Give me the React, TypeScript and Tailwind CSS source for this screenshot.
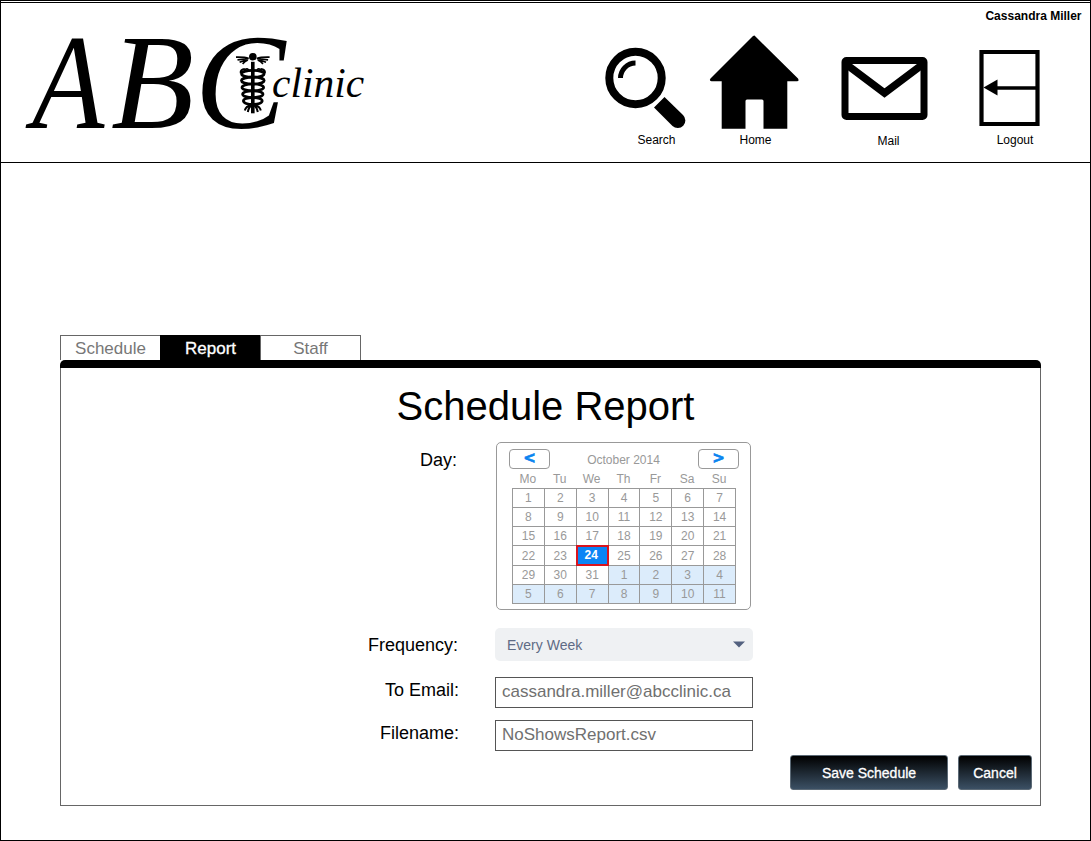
import React from "react";

const weekDays = ["Mo", "Tu", "We", "Th", "Fr", "Sa", "Su"];
const days = [
  ...Array.from({ length: 31 }, (_, i) => ({ n: i + 1, next: false })),
  ...Array.from({ length: 11 }, (_, i) => ({ n: i + 1, next: true })),
];

const coils = [
  { y: 72.8, rx: 11.4 },
  { y: 79.6, rx: 11.4 },
  { y: 86.4, rx: 10.8 },
  { y: 93.2, rx: 10.2 },
  { y: 100, rx: 9.4 },
];

function Logo() {
  return (
    <svg
      width="380"
      height="158"
      viewBox="1 3 380 158"
      fill="#000"
      className="shrink-0 font-['Liberation_Serif',serif] italic"
      role="img"
      aria-label="ABC clinic"
    >
      <text transform="translate(32 128) scale(.87 1)" fontSize="136">A</text>
      <text x="111" y="128" fontSize="136">B</text>
      <text x="194.8" y="128.3" fontSize="136">C</text>
      <text x="272" y="97.3" fontSize="41.5">clinic</text>
      <g transform="translate(252.8 0)">
        <circle cx="0" cy="56.7" r="3.8" />
        <rect x="-1.8" y="61.8" width="3.6" height="51.5" />
        {[1, -1].map((s) => (
          <g key={s} transform={`scale(${s} 1)`} fill="none" stroke="#000">
            <path
              d="M4 58.5Q8 57 16.8 57.2M4.5 59Q9 59 15.3 59.8M4.8 59.5Q9 60.5 13.2 62.3M5 60Q8 61.5 10.2 63.8"
              strokeWidth="1.7"
            />
            <path d="M4 70.8Q4.5 68 7.5 69.2L8.5 70" strokeWidth="1.6" />
            <path d="M8 69Q12.5 69.5 12 73" strokeWidth="2.2" />
            <path d="M1 105Q7 106 8 110.5M0 104.5Q4 106.5 5 112" strokeWidth="2" />
          </g>
        ))}
        {coils.map((c) => (
          <ellipse key={c.y} cx="0" cy={c.y + 1} rx={c.rx} ry="3.4" fill="none" stroke="#000" strokeWidth="2.7" />
        ))}
      </g>
    </svg>
  );
}

function Header() {
  return (
    <header className="flex h-[161px] items-start border-y border-black">
      <Logo />
      <div className="flex flex-1 flex-col text-[12px] leading-[14px]">
        <div className="mt-[6px] pr-[8.5px] text-right font-bold">Cassandra Miller</div>
        <nav className="flex items-start pl-[223px]">
          <a className="mt-[24px] flex w-[82px] flex-col">
            <svg width="82" height="82" viewBox="0 0 82 82">
              <circle cx="31.5" cy="31" r="26.2" fill="none" stroke="#000" strokeWidth="8" />
              <path d="M31.5 16A15 15 0 0 0 16.5 31" fill="none" stroke="#000" strokeWidth="5" />
              <path d="M60.5 50L79 68A7.6 7.6 0 0 1 68.5 79L50 60.5Z" />
            </svg>
            <span className="mt-[4px] ml-[33.5px]">Search</span>
          </a>
          <a className="mt-[11px] ml-[22px] flex w-[92px] flex-col items-center">
            <svg width="92" height="96" viewBox="-.5 0 92 96">
              <path d="M46 1.5L89.5 44.5Q91 47.2 88.5 47.2H78.8V94.8H55V67Q55 65.5 53.5 65.5H38.5Q37 65.5 37 67V94.8H13.2V47.2H3Q.3 47 2 44.5L44.5 2Q46 1 47.5 2Z" />
            </svg>
            <span className="mt-[3px] ml-[3px]">Home</span>
          </a>
          <a className="mt-[34px] ml-[40px] flex w-[88px] flex-col items-center">
            <svg width="88" height="63" viewBox="0 0 88 63" fill="none" stroke="#000" strokeWidth="7">
              <rect x="5" y="3.5" width="79" height="56" rx="1.5" />
              <path d="M6.5 7.5L44.5 36L82.5 7.5" strokeWidth="7.5" />
            </svg>
            <span className="mt-[14px] ml-[9px]">Mail</span>
          </a>
          <a className="mt-[27px] ml-[51px] flex w-[61px] flex-col items-center">
            <svg width="61" height="76" viewBox="0 0 61 76">
              <path d="M2.5 2H58.5V74H2.5Z" fill="none" stroke="#000" strokeWidth="4.2" />
              <path d="M17 38H57" stroke="#000" strokeWidth="3.4" />
              <path d="M4.5 37.5L18.5 29.5V45.5Z" />
            </svg>
            <span className="mt-[7px] ml-[11px]">Logout</span>
          </a>
        </nav>
      </div>
    </header>
  );
}

function NavButton({ children }: { children: React.ReactNode }) {
  return (
    <button className="flex h-[20px] w-[41px] items-center justify-center rounded-[4px] border border-[#999] pb-[2px] font-['DejaVu_Sans',sans-serif] text-[15px] leading-none font-bold text-[#0a84f0] [-webkit-text-stroke:0.6px_#0a84f0]">
      {children}
    </button>
  );
}

function Calendar() {
  return (
    <div className="h-[168px] w-[255px] rounded-[5px] border border-[#999] pt-[6px] pr-[11px] pl-[12px] text-[12px] text-[#999]">
      <div className="flex h-[20px] items-center justify-between leading-[14px]">
        <NavButton>&lt;</NavButton>
        <span className="pt-[2px] pr-px">October 2014</span>
        <NavButton>&gt;</NavButton>
      </div>
      <div className="ml-[3px] grid h-[19px] w-[223px] grid-cols-7 items-center text-center leading-[14px]">
        {weekDays.map((d) => (
          <span key={d}>{d}</span>
        ))}
      </div>
      <div className="ml-[3px] grid h-[116px] w-[224px] grid-cols-7 grid-rows-6 border-r border-b border-[#999]">
        {days.map((d, i) => (
          <div
            key={i}
            className={
              !d.next && d.n === 24
                ? "z-10 -mr-px -mb-px flex items-center justify-center border-2 border-[#d9141e] bg-[#0a84f5] pr-[2px] pb-px font-bold text-white"
                : d.next
                  ? "flex items-center justify-center border-t border-l border-[#999] bg-[#dcecfb]"
                  : "flex items-center justify-center border-t border-l border-[#999]"
            }
          >
            {d.n}
          </div>
        ))}
      </div>
    </div>
  );
}

export default function App() {
  return (
    <div className="flex h-[841px] w-[1091px] flex-col border border-black bg-white pt-px font-['Liberation_Sans',Arial,sans-serif] text-black">
      <Header />
      <main className="mt-[172px] ml-[59px] w-[981px]">
        <div className="flex h-[25px] text-center text-[17px] leading-[26px] text-[#777]">
          <div className="w-[100px] border-t border-l border-[#666]">Schedule</div>
          <div className="w-[100px] border-t border-black bg-black pl-px text-white [-webkit-text-stroke:0.3px_white]">
            Report
          </div>
          <div className="w-[101px] border-t border-r border-l border-[#666]">Staff</div>
        </div>
        <div className="h-[8px] rounded-t-[5px] bg-black" />
        <section className="flex h-[438px] flex-col border-x border-b border-[#666]">
          <h1 className="mt-[14px] pr-[10px] text-center text-[40px] leading-[48px]">Schedule Report</h1>
          <div className="mt-[12px] flex text-[18px] leading-[20px]">
            <div className="w-[398px] pt-[8px] pr-[2px] text-right">Day:</div>
            <div className="ml-[37px]">
              <Calendar />
            </div>
          </div>
          <div className="mt-[18px] flex h-[33px] items-center text-[18px] leading-[20px]">
            <label className="w-[398px] pr-px text-right">Frequency:</label>
            <div className="ml-[36px] flex h-[33px] w-[258px] items-center justify-between rounded-[5px] bg-[#eff1f3] pr-[8px] pl-[12px] text-[14px] text-[#5e6b85]">
              Every Week
              <svg width="12" height="7" viewBox="0 0 12 7" fill="#53617f">
                <path d="M0 .5H12L6 6.5Z" />
              </svg>
            </div>
          </div>
          <div className="mt-[16px] flex text-[18px] leading-[20px]">
            <label className="w-[398px] pt-[3px] text-right">To Email:</label>
            <input
              readOnly
              className="ml-[36px] h-[31px] w-[258px] border border-[#555] px-[6px] pb-[2px] text-[17px] text-[#707070] outline-none"
              value="cassandra.miller@abcclinic.ca"
            />
          </div>
          <div className="mt-[12px] flex text-[18px] leading-[20px]">
            <label className="w-[398px] pt-[3px] text-right">Filename:</label>
            <input
              readOnly
              className="ml-[36px] h-[31px] w-[258px] border border-[#555] px-[6px] pb-[2px] text-[17px] text-[#707070] outline-none"
              value="NoShowsReport.csv"
            />
          </div>
          <div className="mt-[4px] mr-[8px] flex justify-end gap-[10px] text-[14px] text-white [-webkit-text-stroke:0.3px_white]">
            <button className="h-[35px] w-[158px] rounded-[3px] border border-[#5c6a76] bg-linear-to-b/srgb from-black to-[#3b5064] pt-[2px]">
              Save Schedule
            </button>
            <button className="h-[35px] w-[74px] rounded-[3px] border border-[#5c6a76] bg-linear-to-b/srgb from-black to-[#3b5064] pt-[2px]">
              Cancel
            </button>
          </div>
        </section>
      </main>
    </div>
  );
}
